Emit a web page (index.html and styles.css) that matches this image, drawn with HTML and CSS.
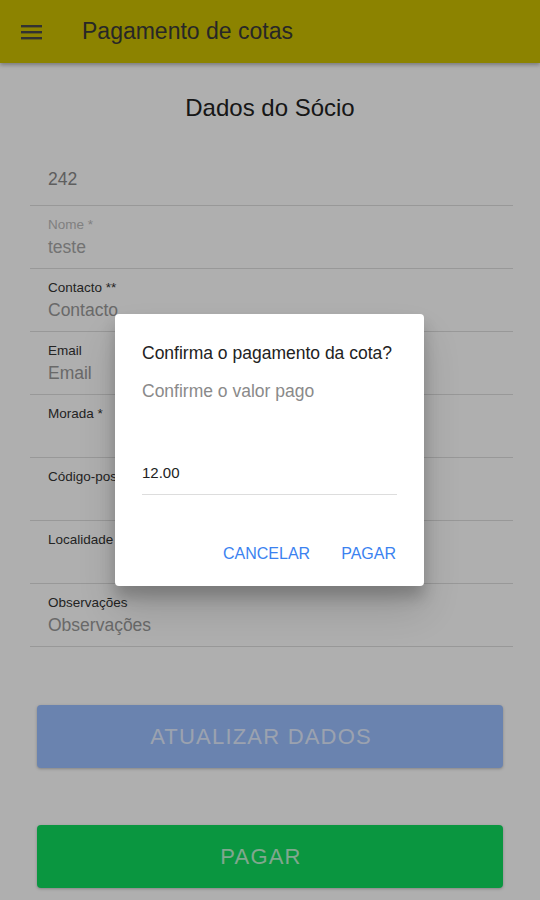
FILE: index.html
```html
<!DOCTYPE html>
<html lang="pt">
  <head>
    <meta charset="UTF-8" />
    <meta name="viewport" content="width=device-width, initial-scale=1.0" />
    <title>Pagamento de cotas</title>
    <link rel="stylesheet" href="styles.css">
  </head>
  <body>
    <header class="toolbar">
      <svg class="menuIcon" width="21" height="15" viewBox="0 0 21 15">
        <rect x="0" y="0" width="21" height="2.4" />
        <rect x="0" y="6" width="21" height="2.4" />
        <rect x="0" y="12" width="21" height="2.4" />
      </svg>
      <span class="toolbarTitle">Pagamento de cotas</span>
    </header>
    <main class="content">
      <h2 class="pageTitle">Dados do Sócio</h2>
      <div class="fields">
        <div class="field noLabel">
          <span class="value">242</span>
        </div>
        <div class="field">
          <span class="label faded">Nome *</span>
          <span class="value light">teste</span>
        </div>
        <div class="field">
          <span class="label">Contacto **</span>
          <span class="value placeholder">Contacto</span>
        </div>
        <div class="field">
          <span class="label">Email</span>
          <span class="value placeholder">Email</span>
        </div>
        <div class="field">
          <span class="label">Morada *</span>
          <span class="value"></span>
        </div>
        <div class="field">
          <span class="label">Código-postal</span>
          <span class="value"></span>
        </div>
        <div class="field">
          <span class="label">Localidade</span>
          <span class="value"></span>
        </div>
        <div class="field">
          <span class="label">Observações</span>
          <span class="value placeholder">Observações</span>
        </div>
      </div>
      <button class="bigButton updateButton" disabled>ATUALIZAR DADOS</button>
      <button class="bigButton payButton">PAGAR</button>
    </main>
    <div class="backdrop">
      <div class="dialog">
        <div class="dialogTitle">Confirma o pagamento da cota?</div>
        <div class="dialogMessage">Confirme o valor pago</div>
        <div class="dialogInput">12.00</div>
        <div class="dialogButtons">
          <button class="textButton">CANCELAR</button>
          <button class="textButton">PAGAR</button>
        </div>
      </div>
    </div>
  </body>
</html>
```

FILE: styles.css
```css
* {
  box-sizing: border-box;
}
html {
  font-family: "Liberation Sans", Arial, sans-serif;
}
body {
  margin: 0;
  background: #fff;
  height: 900px;
  overflow: hidden;
  position: relative;
}
.toolbar {
  height: 63px;
  background: #ccbf00;
  display: flex;
  align-items: center;
  padding-left: 21px;
  box-shadow: 0 2px 4px rgba(0, 0, 0, 0.3);
  position: relative;
}
.menuIcon {
  fill: #4a4a4a;
  margin-top: 1px;
}
.toolbarTitle {
  margin-left: 40px;
  font-size: 23px;
  color: #3a3a3a;
}
.pageTitle {
  margin: 0;
  padding-top: 31px;
  height: 80px;
  text-align: center;
  font-weight: normal;
  font-size: 24px;
  line-height: 28px;
  color: #222;
}
.fields {
  margin: 0 27px 0 30px;
}
.field {
  height: 63px;
  border-bottom: 1px solid #dedede;
  padding: 12px 0 0 18px;
  display: flex;
  flex-direction: column;
}
.field.noLabel {
  padding-top: 25px;
}
.label {
  font-size: 13.5px;
  line-height: 14px;
  height: 14px;
  margin-bottom: 4px;
  color: #333;
}
.label.faded {
  color: #bbb;
}
.value {
  font-size: 17.5px;
  line-height: 22px;
  height: 22px;
  color: #8a8a8a;
}
.value.light {
  color: #a8a8a8;
}
.value.placeholder {
  color: #999;
}
.noLabel .value {
  color: #8a8a8a;
}
.bigButton {
  display: block;
  width: 466px;
  height: 63px;
  margin-left: 37px;
  padding: 0 18px 0 0;
  border: none;
  border-radius: 4px;
  font-family: inherit;
  font-size: 22px;
  letter-spacing: 1.2px;
  box-shadow: 0 1px 3px rgba(0, 0, 0, 0.25);
}
.updateButton {
  margin-top: 58px;
  background: #9bbfff;
  color: rgba(255, 255, 255, 0.72);
}
.payButton {
  margin-top: 57px;
  background: #0fdb5e;
  color: rgba(255, 255, 255, 0.72);
}
.backdrop {
  position: absolute;
  inset: 0;
  background: rgba(0, 0, 0, 0.315);
  display: flex;
  align-items: center;
  justify-content: center;
}
.dialog {
  width: 309px;
  height: 272px;
  margin-left: -1px;
  background: #fff;
  border-radius: 4px;
  box-shadow: 0 11px 15px rgba(0, 0, 0, 0.2), 0 24px 38px rgba(0, 0, 0, 0.14);
  padding: 28px 27px 0 27px;
}
.dialogTitle {
  font-size: 17.5px;
  line-height: 22px;
  white-space: nowrap;
  color: #222;
}
.dialogMessage {
  margin-top: 16px;
  font-size: 17.5px;
  line-height: 22px;
  color: #8a8a8a;
}
.dialogInput {
  margin-top: 60px;
  height: 33px;
  padding-top: 2px;
  font-size: 15px;
  line-height: 18px;
  color: #222;
  border-bottom: 1px solid #ddd;
}
.dialogButtons {
  display: flex;
  justify-content: flex-end;
  gap: 31px;
  margin-top: 50px;
  padding-right: 1px;
}
.textButton {
  border: none;
  background: none;
  padding: 0;
  font-family: inherit;
  font-size: 16px;
  line-height: 18px;
  color: #3b82f0;
}
```
